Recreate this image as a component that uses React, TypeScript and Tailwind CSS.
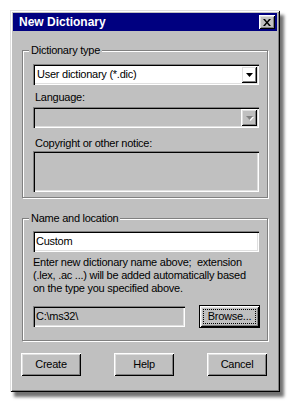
const raised =
  'shadow-[inset_1px_1px_#fff,inset_-1px_-1px_#000,inset_2px_2px_#dfdfdf,inset_-2px_-2px_#808080]';
const sunken =
  'shadow-[inset_1px_1px_#808080,inset_2px_2px_#000,inset_-1px_-1px_#fff,inset_-2px_-2px_#dfdfdf]';
const etched = 'border border-[#808080] shadow-[inset_1px_1px_#fff,1px_1px_#fff]';

const Arrow = ({ disabled }: { disabled?: boolean }) => (
  <div className={`w-[16px] h-full flex items-center justify-center ${raised}`}>
    <svg width="9" height="6" viewBox="0 0 9 6">
      {disabled && <polygon points="2,2 9,2 5.5,6" fill="#fff" />}
      <polygon points="1,1 8,1 4.5,5" fill={disabled ? '#808080' : '#000'} />
    </svg>
  </div>
);

const GroupBox = ({ label, className, children }: { label: string; className: string; children: React.ReactNode }) => (
  <div className={`relative ${etched} ${className}`}>
    <span className="absolute -top-[8px] left-[6px] bg-[#c0c0c0] px-[2px] leading-[15px]">{label}</span>
    {children}
  </div>
);

const Button = ({ label }: { label: string }) => (
  <button className={`w-[60px] h-[23px] bg-[#c0c0c0] flex items-center justify-center ${raised}`}>{label}</button>
);

export default function App() {
  return (
    <div
      className="w-[290px] h-[404px] bg-white pt-[10px] pl-[10px] text-[11px] tracking-[-0.25px] text-black"
      style={{ fontFamily: '"Liberation Sans", Arial, sans-serif' }}
    >
      <div
        className="w-[270px] h-[382px] bg-[#c0c0c0] p-[3px] flex flex-col shadow-[inset_1px_1px_#dfdfdf,inset_-1px_-1px_#000,inset_2px_2px_#fff,inset_-2px_-2px_#808080,4px_5px_3px_rgba(0,0,0,0.55)]"
      >
        <div className="h-[18px] bg-[#000080] flex items-center justify-between pl-[6px] pr-[2px]">
          <span className="text-white font-bold text-[12px] tracking-normal">New Dictionary</span>
          <div className={`w-[16px] h-[14px] bg-[#c0c0c0] flex items-center justify-center ${raised}`}>
            <svg width="8" height="7" viewBox="0 0 8 7">
              <path d="M0 0h2l2 2.5L6 0h2L5 3.5 8 7H6L4 4.5 2 7H0l3-3.5z" fill="#000" />
            </svg>
          </div>
        </div>

        <div className="px-[9px] flex flex-col">
          <GroupBox label="Dictionary type" className="mt-[19px] h-[148px] pl-[10px] pr-[8px] pt-[13px]">
            <div className={`h-[21px] bg-white flex items-center pl-[4px] pr-[2px] py-[2px] ${sunken}`}>
              <span className="flex-1">User dictionary (*.dic)</span>
              <Arrow />
            </div>
            <div className="mt-[5px] pl-[2px] leading-[15px]">Language:</div>
            <div className={`mt-[2px] h-[21px] flex items-center justify-end pr-[2px] py-[2px] ${sunken}`}>
              <Arrow disabled />
            </div>
            <div className="mt-[8px] pl-[2px] leading-[15px]">Copyright or other notice:</div>
            <div className={`h-[41px] ${sunken}`} />
          </GroupBox>

          <GroupBox label="Name and location" className="mt-[20px] h-[123px] pl-[10px] pr-[8px] pt-[12px]">
            <div className={`h-[21px] bg-white flex items-center pl-[3px] ${sunken}`}>Custom</div>
            <p className="mt-[4px] leading-[13px] whitespace-nowrap">
              Enter new dictionary name above;&nbsp; extension
              <br />
              (.lex, .ac ...) will be added automatically based
              <br />
              on the type you specified above.
            </p>
            <div className="mt-[10px] flex items-center justify-between">
              <div className={`w-[152px] h-[21px] flex items-center pl-[3px] ${sunken}`}>C:\ms32\</div>
              <div className="w-[61px] h-[23px] border border-black bg-[#c0c0c0] -mr-[1px]">
                <div className={`w-full h-full p-[3px] ${raised}`}>
                  <div className="w-full h-full border border-dotted border-black flex items-center justify-center">
                    Browse...
                  </div>
                </div>
              </div>
            </div>
          </GroupBox>

          <div className="mt-[12px] -ml-[1px] w-[246px] flex justify-between">
            <Button label="Create" />
            <Button label="Help" />
            <Button label="Cancel" />
          </div>
        </div>
      </div>
    </div>
  );
}
